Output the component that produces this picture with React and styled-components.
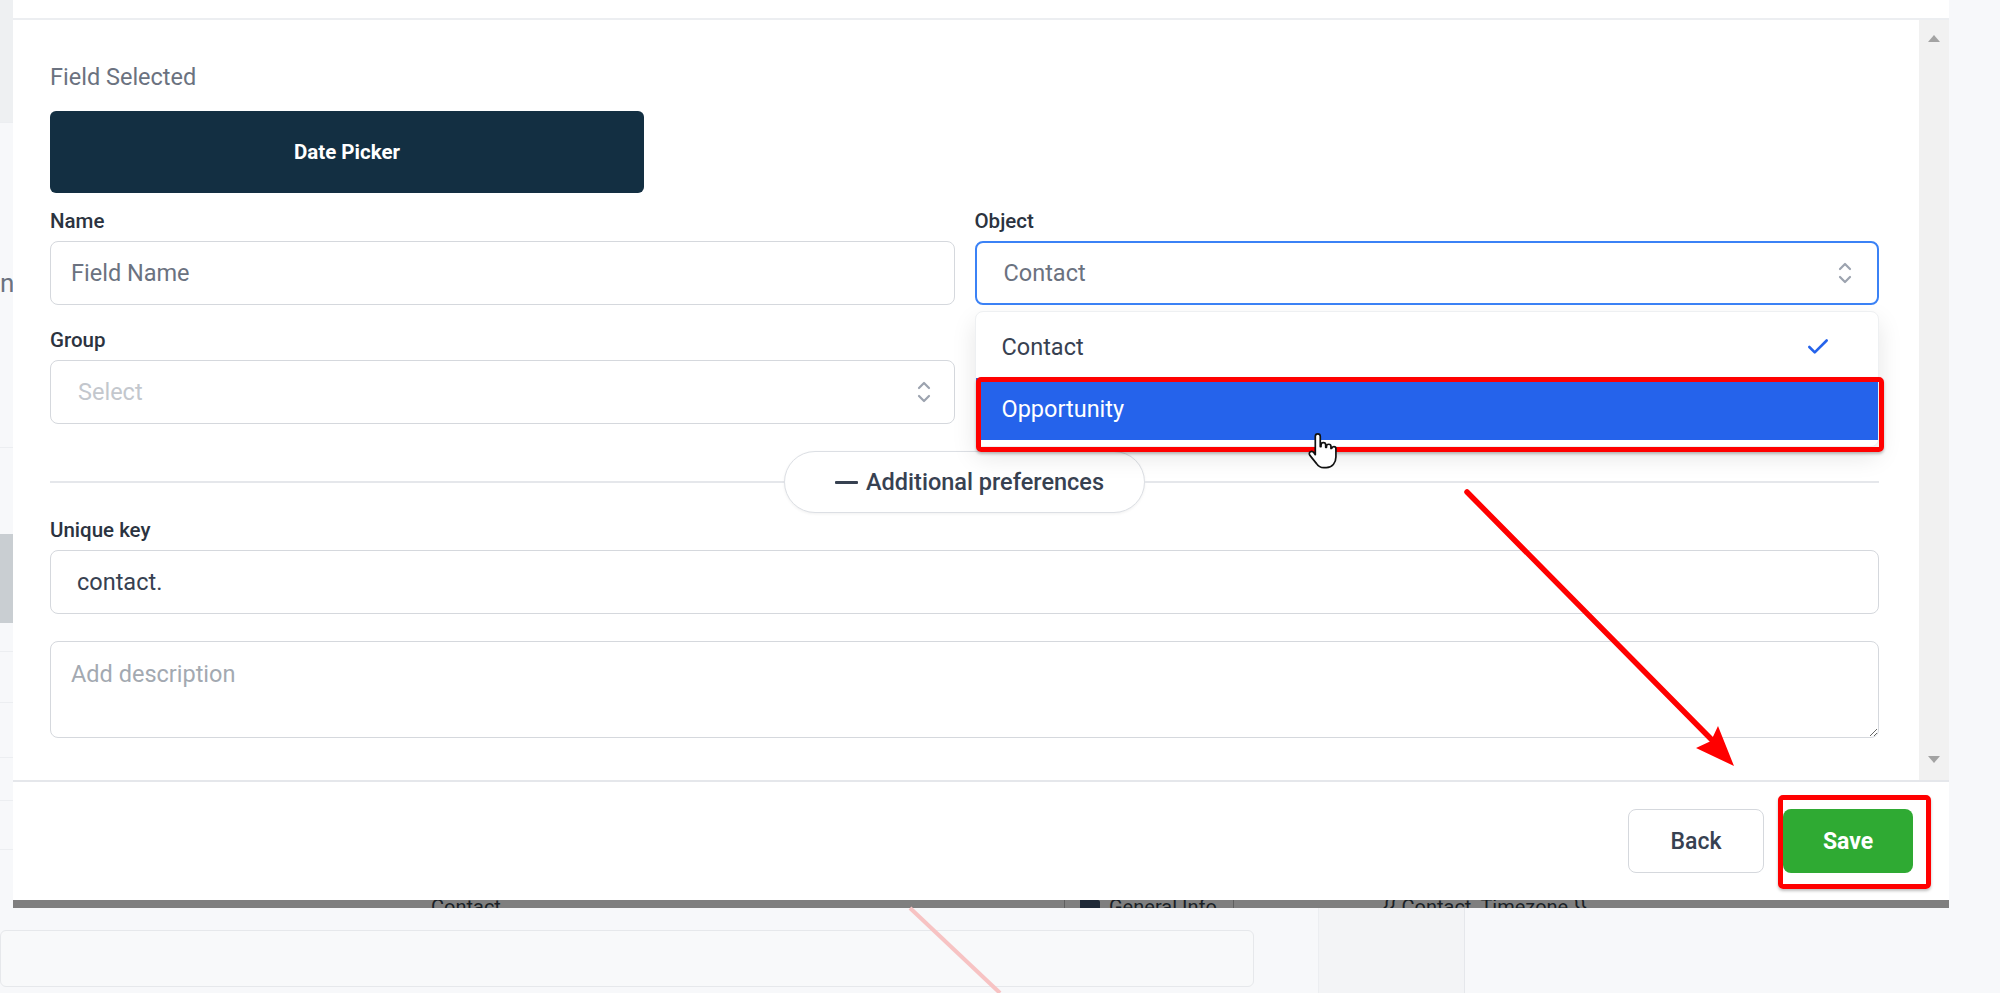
import React from 'react';
import styled, { createGlobalStyle } from 'styled-components';
import { Check } from 'lucide-react';

const GlobalStyle = createGlobalStyle`
  html, body {
    margin: 0;
    padding: 0;
  }
  body {
    background: #f7f8fa;
    font-family: Roboto, 'Liberation Sans', sans-serif;
    color: #374151;
  }
  * {
    box-sizing: border-box;
  }
`;

const Page = styled.div`
  position: relative;
  width: 2000px;
  height: 993px;
  overflow: hidden;
  background: #f7f8fa;
`;

/* page behind the dialog */

const Backdrop = styled.div`
  display: flex;
  flex-direction: column;
  height: 100%;
`;

const BackdropUpper = styled.div`
  height: 908px;
  display: flex;
`;

const SideStrip = styled.div`
  width: 13px;
  display: flex;
  flex-direction: column;
`;

const StripBlock = styled.div`
  height: ${p => p.h}px;
  background: ${p => p.bg || 'transparent'};
  border-bottom: ${p => (p.line ? '1px solid #eceef1' : 'none')};
  color: #6b7280;
  font-size: 26px;
  line-height: 1;
  overflow: hidden;
`;

const BackdropLower = styled.div`
  flex: 1;
  display: flex;
`;

const SearchBox = styled.div`
  width: 1254px;
  height: 57px;
  margin-top: 22px;
  border: 1px solid #e6e8eb;
  border-radius: 6px;
  background: #f8f9fa;
`;

const PanelColumn = styled.div`
  width: ${p => p.w}px;
  margin-left: ${p => p.offset || 0}px;
  border-left: 1px solid ${p => p.edge};
  background: ${p => p.bg || 'transparent'};
`;

/* dialog */

const Modal = styled.div`
  position: absolute;
  left: 13px;
  top: 0;
  width: 1936px;
  height: 908px;
  background: #fff;
  display: flex;
  flex-direction: column;
`;

const ModalHead = styled.div`
  height: 20px;
  border-bottom: 2px solid #eceef1;
`;

const ModalBody = styled.div`
  height: 760px;
  display: flex;
`;

const Form = styled.div`
  flex: 1;
  padding: 43px 40px 0 37px;
  display: flex;
  flex-direction: column;
`;

const SelectedTitle = styled.div`
  font-size: 23.5px;
  line-height: 28px;
  color: #6b7280;
  margin-bottom: 20px;
`;

const FieldTile = styled.div`
  width: 594px;
  height: 82px;
  border-radius: 6px;
  background: #132f42;
  color: #fff;
  font-size: 20.5px;
  font-weight: 700;
  display: flex;
  align-items: center;
  justify-content: center;
`;

const FieldGrid = styled.div`
  display: grid;
  grid-template-columns: 1fr 1fr;
  column-gap: 20px;
  row-gap: 24px;
  margin-top: 17px;
`;

const Field = styled.div`
  position: relative;
  display: flex;
  flex-direction: column;
  margin-top: ${p => p.gap || 0}px;
`;

const Label = styled.label`
  font-size: 20.5px;
  font-weight: 500;
  line-height: 22px;
  color: #2b3340;
  margin-bottom: 9px;
`;

const TextInput = styled.input`
  height: 64px;
  width: 100%;
  border: 1.5px solid #d5d8dd;
  border-radius: 8px;
  padding: 0 ${p => p.pad || 20}px;
  font-family: inherit;
  font-size: 23.5px;
  color: #374151;
  background: #fff;
  outline: none;
  &::placeholder {
    color: #6b7280;
  }
`;

const SelectBox = styled.div`
  height: 64px;
  border: ${p => (p.focused ? '2.5px solid #3b82f6' : '1.5px solid #d5d8dd')};
  border-radius: 8px;
  padding: 0 ${p => p.padRight}px 0 ${p => p.padLeft}px;
  display: flex;
  align-items: center;
  justify-content: space-between;
  font-size: 23.5px;
  color: ${p => (p.empty ? '#c3c7cd' : '#6b7280')};
  background: #fff;
`;

const Listbox = styled.div`
  position: absolute;
  left: 0;
  right: 0;
  top: calc(100% + 6px);
  padding: 4px 0 6px;
  background: #fff;
  border: 1px solid #eef0f2;
  border-radius: 8px;
  box-shadow: 0 10px 24px rgba(0, 0, 0, 0.1);
  z-index: 5;
`;

const Option = styled.div`
  position: relative;
  height: 62px;
  display: flex;
  align-items: center;
  justify-content: space-between;
  padding: 0 47px 0 26px;
  font-size: 23.5px;
  color: ${p => (p.active ? '#fff' : '#374151')};
  background: ${p => (p.active ? '#2563eb' : 'transparent')};
`;

const Callout = styled.div`
  position: absolute;
  top: ${p => p.t}px;
  left: ${p => p.l}px;
  right: ${p => p.r}px;
  bottom: ${p => p.b}px;
  border: 5px solid #ff0000;
  border-radius: 5px;
  box-shadow: 0 2px 3px rgba(0, 0, 0, 0.25);
  pointer-events: none;
`;

const DividerRow = styled.div`
  margin-top: 27px;
  height: 62px;
  display: flex;
  align-items: center;
`;

const Rule = styled.div`
  flex: 1;
  height: 2px;
  background: #e5e7eb;
`;

const PrefsPill = styled.button`
  height: 62px;
  padding: 0 40px 0 50px;
  border: 1.5px solid #dcdfe4;
  border-radius: 999px;
  background: #fff;
  box-shadow: 0 1px 3px rgba(0, 0, 0, 0.06);
  display: flex;
  align-items: center;
  gap: 8px;
  font-family: inherit;
  font-size: 23.5px;
  font-weight: 500;
  color: #374151;
`;

const Dash = styled.span`
  width: 23px;
  height: 3px;
  background: #374151;
  border-radius: 1px;
`;

const Description = styled.textarea`
  margin-top: 27px;
  height: 97px;
  width: 100%;
  border: 1.5px solid #d5d8dd;
  border-radius: 8px;
  padding: 18px 20px;
  font-family: inherit;
  font-size: 23.5px;
  color: #374151;
  resize: vertical;
  outline: none;
  &::placeholder {
    color: #a3a9b1;
  }
`;

const Scrollbar = styled.div`
  width: 30px;
  background: #f1f1f1;
  display: flex;
  flex-direction: column;
  justify-content: space-between;
  align-items: center;
  padding: 15px 0 17px;
`;

const ScrollArrow = styled.div`
  width: 0;
  height: 0;
  border-left: 6px solid transparent;
  border-right: 6px solid transparent;
  ${p =>
    p.down
      ? 'border-top: 7px solid #a3a3a3;'
      : 'border-bottom: 7px solid #a3a3a3;'}
`;

const ModalFoot = styled.div`
  height: 120px;
  border-top: 2px solid #e5e7eb;
  display: flex;
  align-items: center;
  justify-content: flex-end;
  gap: 19px;
  padding-right: 36px;
`;

const FootButton = styled.button`
  position: relative;
  height: 64px;
  width: ${p => p.w}px;
  border-radius: 8px;
  font-family: inherit;
  font-size: 23px;
  font-weight: ${p => (p.primary ? 700 : 500)};
  color: ${p => (p.primary ? '#fff' : '#374151')};
  background: ${p => (p.primary ? '#2faa33' : '#fff')};
  border: ${p => (p.primary ? 'none' : '1.5px solid #d5d8dd')};
`;

const ModalEdge = styled.div`
  height: 8px;
  background: #7f7f7f;
  overflow: hidden;
  display: flex;
  font-size: 20px;
  line-height: 20px;
  color: #1a1f26;
`;

const EdgeCell = styled.div`
  width: ${p => p.w}px;
  padding-left: ${p => p.pad}px;
  margin-top: -3px;
  border-left: ${p => (p.sep ? '1px solid #5f5f5f' : 'none')};
  display: flex;
  gap: 8px;
  white-space: nowrap;
`;

const Overlay = styled.svg`
  position: absolute;
  left: 0;
  top: 0;
  pointer-events: none;
  z-index: 10;
`;

const SelectorIcon = () => (
  <svg width="16" height="26" viewBox="0 0 16 26" fill="none" stroke="#9ca3af" strokeWidth="2.2" strokeLinecap="round" strokeLinejoin="round">
    <path d="M3 9 L8 4 L13 9" />
    <path d="M3 17 L8 22 L13 17" />
  </svg>
);

const FolderGlyph = () => (
  <svg width="22" height="18" viewBox="0 0 22 18">
    <path d="M1 3 a2 2 0 0 1 2-2 h5 l2 2 h9 a2 2 0 0 1 2 2 v10 a2 2 0 0 1-2 2 H3 a2 2 0 0 1-2-2 z" fill="#1f2937" />
  </svg>
);

export default function App() {
  return (
    <Page>
      <GlobalStyle />

      <Backdrop>
        <BackdropUpper>
          <SideStrip>
            <StripBlock h={123} bg="#eef0f2" line />
            <StripBlock h={147} />
            <StripBlock h={178} line>n</StripBlock>
            <StripBlock h={86} />
            <StripBlock h={89} bg="#c9ced2" />
            <StripBlock h={29} line />
            <StripBlock h={51} line />
            <StripBlock h={55} line />
            <StripBlock h={43} line />
            <StripBlock h={49} line />
          </SideStrip>
        </BackdropUpper>
        <BackdropLower>
          <SearchBox />
          <PanelColumn w={146} offset={64} edge="#eceef1" bg="#f3f4f6" />
          <PanelColumn w={536} edge="#e5e7eb" />
        </BackdropLower>
      </Backdrop>

      <Modal>
        <ModalHead />
        <ModalBody>
          <Form>
            <SelectedTitle>Field Selected</SelectedTitle>
            <FieldTile>Date Picker</FieldTile>

            <FieldGrid>
              <Field>
                <Label>Name</Label>
                <TextInput placeholder="Field Name" />
              </Field>
              <Field>
                <Label>Object</Label>
                <SelectBox focused padLeft={27} padRight={24}>
                  <span>Contact</span>
                  <SelectorIcon />
                </SelectBox>
                <Listbox>
                  <Option>
                    <span>Contact</span>
                    <Check size={26} color="#2563eb" strokeWidth={2.4} />
                  </Option>
                  <Option active>
                    <span>Opportunity</span>
                    <Callout t={-1} l={0} r={-6} b={-12} />
                  </Option>
                </Listbox>
              </Field>
              <Field>
                <Label>Group</Label>
                <SelectBox empty padLeft={27} padRight={22}>
                  <span>Select</span>
                  <SelectorIcon />
                </SelectBox>
              </Field>
            </FieldGrid>

            <DividerRow>
              <Rule />
              <PrefsPill>
                <Dash />
                Additional preferences
              </PrefsPill>
              <Rule />
            </DividerRow>

            <Field gap={6}>
              <Label>Unique key</Label>
              <TextInput defaultValue="contact." pad={26} />
            </Field>

            <Description placeholder="Add description" />
          </Form>
          <Scrollbar>
            <ScrollArrow />
            <ScrollArrow down />
          </Scrollbar>
        </ModalBody>

        <ModalFoot>
          <FootButton w={136}>Back</FootButton>
          <FootButton w={130} primary>
            Save
            <Callout t={-14} l={-5} r={-18} b={-16} />
          </FootButton>
        </ModalFoot>

        <ModalEdge>
          <EdgeCell w={1051} pad={418}>Contact</EdgeCell>
          <EdgeCell w={169} pad={14} sep>
            <FolderGlyph />
            General Info
          </EdgeCell>
          <EdgeCell w={600} pad={149} sep>
            {'{{ Contact_Timezone }}'}
          </EdgeCell>
        </ModalEdge>
      </Modal>

      <Overlay width="2000" height="993" viewBox="0 0 2000 993">
        {/* faded stroke on the page beneath */}
        <line x1="910" y1="908" x2="1000" y2="993" stroke="#f7c3c3" strokeWidth="4" />
        {/* arrow pointing at the save button */}
        <line x1="1467" y1="492" x2="1712" y2="740" stroke="#ff0000" strokeWidth="5.5" strokeLinecap="round" />
        <polygon points="1734,766 1696,748 1711,741 1718,726" fill="#ff0000" />
        {/* pointer cursor */}
        <g transform="translate(1306 432) scale(1.55)">
          <path
            d="M7.6 1.2c.9 0 1.6.7 1.6 1.6v6.6h.5V8.4c0-.9.7-1.5 1.5-1.5s1.5.6 1.5 1.5v1.5h.5V9.3c0-.8.7-1.4 1.5-1.4s1.4.6 1.4 1.4v1.3h.5c.1-.7.7-1.2 1.4-1.2s1.3.6 1.3 1.3v5.4c0 3.8-2.4 6.9-6.2 6.9h-1.6c-2 0-3.600-.9-4.7-2.6L2.4 14.9c-.5-.8-.3-1.8.5-2.2.7-.4 1.6-.2 2.1.5L6 14.6V2.8c0-.9.7-1.6 1.6-1.6z"
            fill="#fff"
            stroke="#111"
            strokeWidth="1.1"
            strokeLinejoin="round"
          />
        </g>
      </Overlay>
    </Page>
  );
}
